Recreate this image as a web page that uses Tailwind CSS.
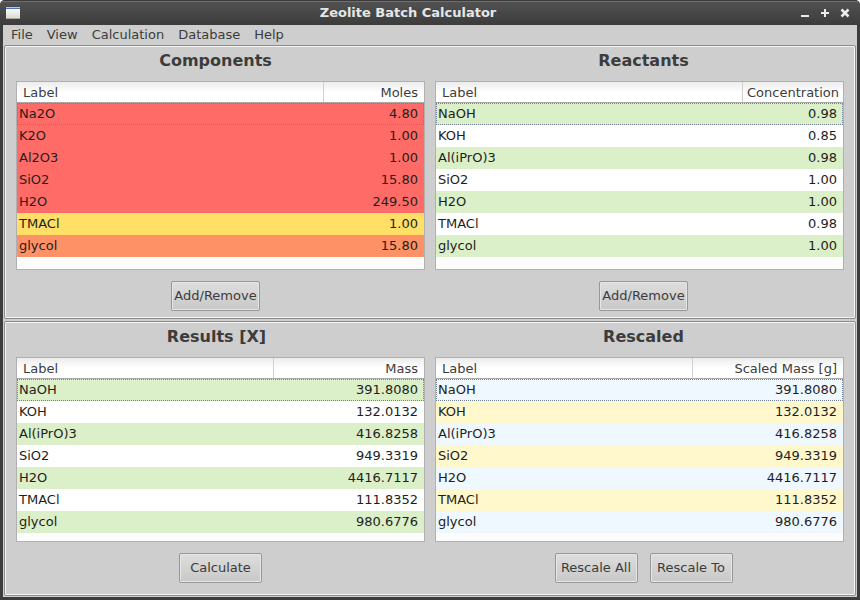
<!DOCTYPE html>
<html lang="en">
<head>
<meta charset="utf-8">
<meta name="viewport" content="width=device-width, initial-scale=1">
<title>Zeolite Batch Calculator</title>
<script src="https://cdn.jsdelivr.net/npm/@tailwindcss/browser@4"></script>
</head>
<body class="bg-white font-['DejaVu_Sans',sans-serif] text-[13px] text-[#3c3c3c]">
<div class="flex h-screen min-h-[600px] flex-col overflow-hidden rounded-t-[5px] bg-[#3c3c3c]">

  <header class="flex h-[25px] shrink-0 items-center border-t border-[#3a3a3a] bg-linear-to-b from-[#525252] to-[#3c3c3c] pr-[9px] pl-[6px] shadow-[inset_0_1px_0_#6e6e6e]">
    <svg class="h-[13px] w-[15px]" viewBox="0 0 15 13" aria-hidden="true">
      <defs>
        <linearGradient id="win" x1="0" y1="0" x2="0" y2="1"><stop offset="0" stop-color="#ffffff"/><stop offset="1" stop-color="#d9d9d2"/></linearGradient>
      </defs>
      <rect x="0" y="0" width="14" height="12" fill="url(#win)"/>
      <rect x="0" y="0" width="14" height="1" fill="#b5c8e4"/>
      <rect x="0" y="1" width="14" height="1" fill="#4a74b4"/>
      <rect x="0" y="11" width="14" height="1" fill="#a9a9a2"/>
    </svg>
    <h1 class="flex-1 pr-[4px] text-center leading-5 font-bold text-[#e6e6e6]">Zeolite Batch Calculator</h1>
    <div class="flex gap-[8px]">
      <button type="button" aria-label="Minimize" class="size-3">
        <svg class="size-3" viewBox="0 0 12 12"><path d="M2 8h8v2H2z" fill="#ececec"/></svg>
      </button>
      <button type="button" aria-label="Maximize" class="size-3">
        <svg class="size-3" viewBox="0 0 12 12"><path d="M5 2h2v3h3v2H7v3H5V7H2V5h3z" fill="#ececec"/></svg>
      </button>
      <button type="button" aria-label="Close" class="size-3">
        <svg class="size-3" viewBox="0 0 12 12"><path d="M2.5 2.5l7 7M9.5 2.5l-7 7" stroke="#ececec" stroke-width="2.5"/></svg>
      </button>
    </div>
  </header>

  <div class="mx-[3px] mb-[3px] flex flex-1 flex-col bg-[#cecece]">
    <nav class="flex h-5 shrink-0 gap-[14px] pl-2 leading-5" aria-label="Main menu">
      <button type="button">File</button>
      <button type="button">View</button>
      <button type="button">Calculation</button>
      <button type="button">Database</button>
      <button type="button">Help</button>
    </nav>

    <main class="mx-px mb-px grid flex-1 grid-rows-[274fr_275fr] gap-y-[2px]">

      <div class="grid grid-cols-2 rounded-[2px] border border-[#8c8c8c] pb-[7px] shadow-[inset_0_0_0_1px_#f4f4f4]">
        <section class="flex flex-col pt-px pr-[5px] pl-[11px]">
          <h2 class="mr-[10px] mb-[6px] text-center text-[16px] leading-7 font-bold">Components</h2>
          <div class="flex-1 border border-[#b0b0b0] bg-[#fcfcfc]">
            <table class="w-full table-fixed border-separate border-spacing-0 text-[#1e1e1e] [&_tbody_tr:first-child]:outline-1 [&_tbody_tr:first-child]:-outline-offset-1 [&_tbody_tr:first-child]:outline-[#6f8299] [&_tbody_tr:first-child]:outline-dotted [&_td]:h-[22px] [&_td]:pl-[2px] [&_td]:leading-[22px] [&_td:last-child]:pr-[6px] [&_td:last-child]:text-right">
              <thead class="bg-linear-to-b from-[#ececec] to-white to-50% text-[#3c3c3c]">
                <tr>
                  <th scope="col" class="h-[21px] border-b border-[#a8a8a8] pt-[2px] pl-[6px] text-left leading-[18px] font-normal">Label</th>
                  <th scope="col" class="w-[101px] border-b border-l border-b-[#a8a8a8] border-l-[#d0d0d0] pt-[2px] pr-[6px] text-right leading-[18px] font-normal">Moles</th>
                </tr>
              </thead>
              <tbody>
                <tr class="bg-[#ff6b66]"><td>Na2O</td><td>4.80</td></tr>
                <tr class="bg-[#ff6b66]"><td>K2O</td><td>1.00</td></tr>
                <tr class="bg-[#ff6b66]"><td>Al2O3</td><td>1.00</td></tr>
                <tr class="bg-[#ff6b66]"><td>SiO2</td><td>15.80</td></tr>
                <tr class="bg-[#ff6b66]"><td>H2O</td><td>249.50</td></tr>
                <tr class="bg-[#ffdf66]"><td>TMACl</td><td>1.00</td></tr>
                <tr class="bg-[#ff9166]"><td>glycol</td><td>15.80</td></tr>
              </tbody>
            </table>
          </div>
          <div class="mt-[11px] mr-[10px] flex justify-center">
            <button type="button" class="h-[30px] min-w-[83px] rounded-[2px] border border-[#979797] bg-linear-to-b from-[#dedede] to-[#c8c8c8] px-[2px] shadow-[inset_0_0_0_1px_#e6e6e6]">Add/Remove</button>
          </div>
        </section>

        <section class="flex flex-col pt-px pr-[11px] pl-[5px]">
          <h2 class="mb-[6px] ml-[8px] text-center text-[16px] leading-7 font-bold">Reactants</h2>
          <div class="flex-1 border border-[#b0b0b0] bg-[#fcfcfc]">
            <table class="w-full table-fixed border-separate border-spacing-0 text-[#1e1e1e] [&_tbody_tr:first-child]:outline-1 [&_tbody_tr:first-child]:-outline-offset-1 [&_tbody_tr:first-child]:outline-[#6f8299] [&_tbody_tr:first-child]:outline-dotted [&_tbody_tr:nth-child(even)]:bg-white [&_tbody_tr:nth-child(odd)]:bg-[#dbefc8] [&_td]:h-[22px] [&_td]:pl-[2px] [&_td]:leading-[22px] [&_td:last-child]:pr-[6px] [&_td:last-child]:text-right">
              <thead class="bg-linear-to-b from-[#ececec] to-white to-50% text-[#3c3c3c]">
                <tr>
                  <th scope="col" class="h-[21px] border-b border-[#a8a8a8] pt-[2px] pl-[6px] text-left leading-[18px] font-normal">Label</th>
                  <th scope="col" class="w-[101px] border-b border-l border-b-[#a8a8a8] border-l-[#d0d0d0] pt-[2px] pr-[4px] text-right leading-[18px] font-normal">Concentration</th>
                </tr>
              </thead>
              <tbody>
                <tr><td>NaOH</td><td>0.98</td></tr>
                <tr><td>KOH</td><td>0.85</td></tr>
                <tr><td>Al(iPrO)3</td><td>0.98</td></tr>
                <tr><td>SiO2</td><td>1.00</td></tr>
                <tr><td>H2O</td><td>1.00</td></tr>
                <tr><td>TMACl</td><td>0.98</td></tr>
                <tr><td>glycol</td><td>1.00</td></tr>
              </tbody>
            </table>
          </div>
          <div class="mt-[11px] ml-[8px] flex justify-center">
            <button type="button" class="h-[30px] min-w-[83px] rounded-[2px] border border-[#979797] bg-linear-to-b from-[#dedede] to-[#c8c8c8] px-[2px] shadow-[inset_0_0_0_1px_#e6e6e6]">Add/Remove</button>
          </div>
        </section>
      </div>

      <div class="grid grid-cols-2 rounded-[2px] border border-[#8c8c8c] pb-[12px] shadow-[inset_0_0_0_1px_#f4f4f4]">
        <section class="flex flex-col pt-px pr-[5px] pl-[11px]">
          <h2 class="mr-[8px] mb-[6px] text-center text-[16px] leading-7 font-bold">Results [X]</h2>
          <div class="flex-1 border border-[#b0b0b0] bg-[#fcfcfc]">
            <table class="w-full table-fixed border-separate border-spacing-0 text-[#1e1e1e] [&_tbody_tr:first-child]:outline-1 [&_tbody_tr:first-child]:-outline-offset-1 [&_tbody_tr:first-child]:outline-[#6f8299] [&_tbody_tr:first-child]:outline-dotted [&_tbody_tr:nth-child(even)]:bg-white [&_tbody_tr:nth-child(odd)]:bg-[#dbefc8] [&_td]:h-[22px] [&_td]:pl-[2px] [&_td]:leading-[22px] [&_td:last-child]:pr-[6px] [&_td:last-child]:text-right">
              <thead class="bg-linear-to-b from-[#ececec] to-white to-50% text-[#3c3c3c]">
                <tr>
                  <th scope="col" class="h-[21px] border-b border-[#a8a8a8] pt-[2px] pl-[6px] text-left leading-[18px] font-normal">Label</th>
                  <th scope="col" class="w-[151px] border-b border-l border-b-[#a8a8a8] border-l-[#d0d0d0] pt-[2px] pr-[6px] text-right leading-[18px] font-normal">Mass</th>
                </tr>
              </thead>
              <tbody>
                <tr><td>NaOH</td><td>391.8080</td></tr>
                <tr><td>KOH</td><td>132.0132</td></tr>
                <tr><td>Al(iPrO)3</td><td>416.8258</td></tr>
                <tr><td>SiO2</td><td>949.3319</td></tr>
                <tr><td>H2O</td><td>4416.7117</td></tr>
                <tr><td>TMACl</td><td>111.8352</td></tr>
                <tr><td>glycol</td><td>980.6776</td></tr>
              </tbody>
            </table>
          </div>
          <div class="mt-[11px] flex justify-center">
            <button type="button" class="h-[30px] min-w-[83px] rounded-[2px] border border-[#979797] bg-linear-to-b from-[#dedede] to-[#c8c8c8] px-[2px] shadow-[inset_0_0_0_1px_#e6e6e6]">Calculate</button>
          </div>
        </section>

        <section class="flex flex-col pt-px pr-[11px] pl-[5px]">
          <h2 class="mb-[6px] ml-[8px] text-center text-[16px] leading-7 font-bold">Rescaled</h2>
          <div class="flex-1 border border-[#b0b0b0] bg-[#fcfcfc]">
            <table class="w-full table-fixed border-separate border-spacing-0 text-[#1e1e1e] [&_tbody_tr:first-child]:outline-1 [&_tbody_tr:first-child]:-outline-offset-1 [&_tbody_tr:first-child]:outline-[#6f8299] [&_tbody_tr:first-child]:outline-dotted [&_tbody_tr:nth-child(even)]:bg-[#fff8cc] [&_tbody_tr:nth-child(odd)]:bg-[#eff7ff] [&_td]:h-[22px] [&_td]:pl-[2px] [&_td]:leading-[22px] [&_td:last-child]:pr-[6px] [&_td:last-child]:text-right">
              <thead class="bg-linear-to-b from-[#ececec] to-white to-50% text-[#3c3c3c]">
                <tr>
                  <th scope="col" class="h-[21px] border-b border-[#a8a8a8] pt-[2px] pl-[6px] text-left leading-[18px] font-normal">Label</th>
                  <th scope="col" class="w-[151px] border-b border-l border-b-[#a8a8a8] border-l-[#d0d0d0] pt-[2px] pr-[6px] text-right leading-[18px] font-normal">Scaled Mass [g]</th>
                </tr>
              </thead>
              <tbody>
                <tr><td>NaOH</td><td>391.8080</td></tr>
                <tr><td>KOH</td><td>132.0132</td></tr>
                <tr><td>Al(iPrO)3</td><td>416.8258</td></tr>
                <tr><td>SiO2</td><td>949.3319</td></tr>
                <tr><td>H2O</td><td>4416.7117</td></tr>
                <tr><td>TMACl</td><td>111.8352</td></tr>
                <tr><td>glycol</td><td>980.6776</td></tr>
              </tbody>
            </table>
          </div>
          <div class="mt-[11px] ml-[8px] flex justify-center gap-3">
            <button type="button" class="h-[30px] min-w-[83px] rounded-[2px] border border-[#979797] bg-linear-to-b from-[#dedede] to-[#c8c8c8] px-[2px] shadow-[inset_0_0_0_1px_#e6e6e6]">Rescale All</button>
            <button type="button" class="h-[30px] min-w-[83px] rounded-[2px] border border-[#979797] bg-linear-to-b from-[#dedede] to-[#c8c8c8] px-[2px] shadow-[inset_0_0_0_1px_#e6e6e6]">Rescale To</button>
          </div>
        </section>
      </div>

    </main>
  </div>
</div>
</body>
</html>
